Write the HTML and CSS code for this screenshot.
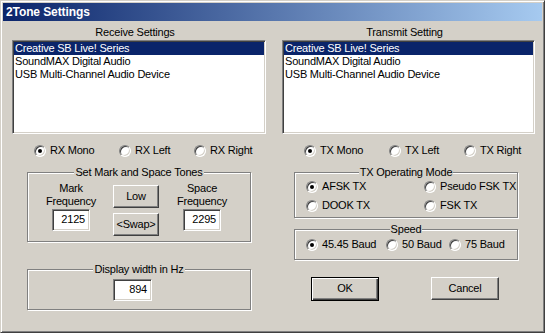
FILE: index.html
```html
<!DOCTYPE html>
<html>
<head>
<meta charset="utf-8">
<title>2Tone Settings</title>
<link rel="stylesheet" href="styles.css">
</head>
<body>
<div class="window">
  <div class="titlebar"><span class="title">2Tone Settings</span></div>
  <div class="client">
    <div class="col col-rx">
      <div class="caption">Receive Settings</div>
      <div class="listbox">
        <div class="item selected">Creative SB Live! Series</div>
        <div class="item">SoundMAX Digital Audio</div>
        <div class="item">USB Multi-Channel Audio Device</div>
      </div>
      <div class="radio-row">
        <label class="radio r1"><span class="dot checked"></span>RX Mono</label>
        <label class="radio r2"><span class="dot"></span>RX Left</label>
        <label class="radio"><span class="dot"></span>RX Right</label>
      </div>
      <fieldset class="group tones">
        <legend>Set Mark and Space Tones</legend>
        <div class="tones-body">
          <div class="freq">
            <div class="freq-label">Mark<br>Frequency</div>
            <div class="textbox">2125</div>
          </div>
          <div class="btns">
            <div class="button">Low</div>
            <div class="button swap">&lt;Swap&gt;</div>
          </div>
          <div class="freq freq-space">
            <div class="freq-label">Space<br>Frequency</div>
            <div class="textbox">2295</div>
          </div>
        </div>
      </fieldset>
      <fieldset class="group display">
        <legend>Display width in Hz</legend>
        <div class="display-body">
          <div class="textbox wide">894</div>
        </div>
      </fieldset>
    </div>
    <div class="col col-tx">
      <div class="caption">Transmit Setting</div>
      <div class="listbox">
        <div class="item selected">Creative SB Live! Series</div>
        <div class="item">SoundMAX Digital Audio</div>
        <div class="item">USB Multi-Channel Audio Device</div>
      </div>
      <div class="radio-row">
        <label class="radio r1"><span class="dot checked"></span>TX Mono</label>
        <label class="radio r2"><span class="dot"></span>TX Left</label>
        <label class="radio"><span class="dot"></span>TX Right</label>
      </div>
      <fieldset class="group opmode">
        <legend>TX Operating Mode</legend>
        <div class="op-grid">
          <label class="radio"><span class="dot checked"></span>AFSK TX</label>
          <label class="radio"><span class="dot"></span>Pseudo FSK TX</label>
          <label class="radio"><span class="dot"></span>DOOK TX</label>
          <label class="radio"><span class="dot"></span>FSK TX</label>
        </div>
      </fieldset>
      <fieldset class="group speed">
        <legend>Speed</legend>
        <div class="speed-row">
          <label class="radio s1"><span class="dot checked"></span>45.45 Baud</label>
          <label class="radio s2"><span class="dot"></span>50 Baud</label>
          <label class="radio"><span class="dot"></span>75 Baud</label>
        </div>
      </fieldset>
      <div class="actions">
        <div class="button default">OK</div>
        <div class="button action">Cancel</div>
      </div>
    </div>
  </div>
</div>
</body>
</html>
```

FILE: styles.css
```css
* { box-sizing: border-box; }
html, body { margin: 0; padding: 0; background: #d4d0c8; }
body {
  font-family: "Liberation Sans", Arial, sans-serif;
  font-size: 11px;
  line-height: 13px;
  color: #000;
  letter-spacing: -0.2px;
}
.window {
  width: 545px;
  height: 333px;
  background: #d4d0c8;
  border: 1px solid;
  border-color: #d4d0c8 #404040 #404040 #d4d0c8;
  box-shadow: inset 1px 1px #fff, inset -1px -1px #808080;
  padding: 2px;
  display: flex;
  flex-direction: column;
}
.titlebar {
  height: 18px;
  flex: none;
  background: linear-gradient(to right, #0a246a, #a6caf0);
  display: flex;
  align-items: center;
  padding-left: 3px;
}
.title {
  color: #fff;
  font-weight: bold;
  font-size: 12px;
  letter-spacing: -0.1px;
}
.client {
  flex: 1;
  display: flex;
  gap: 16px;
  padding-left: 9px;
}
.col { display: flex; flex-direction: column; }
.col-rx { width: 254px; }
.col-tx { width: 253px; }
.caption {
  margin-top: 5px;
  height: 13px;
  text-align: center;
  padding-right: 8px;
}
.listbox {
  margin-top: 1px;
  height: 94px;
  background: #fff;
  border: 1px solid;
  border-color: #808080 #fff #fff #808080;
  box-shadow: inset 1px 1px #404040, inset -1px -1px #d4d0c8;
  padding: 1px;
}
.item { height: 13px; padding-left: 1px; white-space: nowrap; }
.item.selected { background: #0a246a; color: #fff; }
.radio-row {
  margin-top: 10px;
  display: flex;
  padding-left: 22px;
}
.radio {
  display: flex;
  align-items: center;
  height: 13px;
  white-space: nowrap;
}
.r1 { width: 85px; }
.r2 { width: 75px; }
.dot {
  width: 12px;
  height: 12px;
  flex: none;
  margin-right: 4px;
  border-radius: 50%;
  background: #fff;
  border: 1px solid;
  border-color: #808080 #fff #fff #808080;
  box-shadow: inset 1px 1px #404040, inset -1px -1px #d4d0c8;
  position: relative;
}
.dot.checked::after {
  content: "";
  position: absolute;
  left: 3px;
  top: 3px;
  width: 4px;
  height: 4px;
  border-radius: 50%;
  background: #000;
}
.group {
  margin: 0;
  padding: 0;
  border: 1px solid #808080;
  box-shadow: 1px 1px 0 #fff, inset 1px 1px 0 #fff;
  min-width: 0;
}
.group legend {
  margin: 0 auto;
  padding: 0 1px;
  line-height: 13px;
  background: #d4d0c8;
}
.tones {
  margin: 9px 15px 0 15px;
  padding-top: 3px;
  padding-bottom: 5px;
}
.tones-body { display: flex; align-items: flex-start; padding-left: 18px; }
.freq {
  width: 50px;
  display: flex;
  flex-direction: column;
  align-items: center;
}
.freq-label { text-align: center; white-space: nowrap; }
.freq-space { margin-left: 18px; }
.textbox {
  margin-top: 1px;
  width: 38px;
  height: 22px;
  background: #fff;
  border: 1px solid;
  border-color: #808080 #fff #fff #808080;
  box-shadow: inset 1px 1px #404040, inset -1px -1px #d4d0c8;
  padding: 3px 4px 0 0;
  text-align: right;
}
.textbox.wide { width: 39px; margin-top: 0; }
.btns {
  margin-left: 17px;
  margin-top: 3px;
  width: 46px;
  display: flex;
  flex-direction: column;
  gap: 5px;
}
.button {
  height: 23px;
  background: #d4d0c8;
  border: 1px solid;
  border-color: #fff #404040 #404040 #fff;
  box-shadow: inset -1px -1px #808080, inset 1px 1px #d4d0c8;
  display: flex;
  align-items: center;
  justify-content: center;
  padding-bottom: 1px;
}
.display {
  margin: 21px 15px 0 15px;
  padding-top: 3px;
  padding-bottom: 8px;
}
.display-body { padding-left: 85px; }
.opmode {
  margin: 9px 17px 0 12px;
  padding-top: 1px;
  padding-bottom: 5px;
}
.op-grid {
  display: grid;
  grid-template-columns: 118px 1fr;
  row-gap: 6px;
  padding-left: 11px;
}
.speed {
  margin: 5px 17px 0 12px;
  padding-top: 2px;
  padding-bottom: 8px;
}
.speed-row { display: flex; padding-left: 11px; }
.s1 { width: 80px; }
.s2 { width: 63px; }
.actions {
  margin-top: 17px;
  display: flex;
  padding-left: 29px;
  gap: 52px;
  align-items: flex-start;
}
.actions .button { width: 68px; }
.button.default {
  height: 24px;
  border: 1px solid #000;
  box-shadow: inset 1px 1px #fff, inset -1px -1px #404040, inset -2px -2px #808080;
}
```
